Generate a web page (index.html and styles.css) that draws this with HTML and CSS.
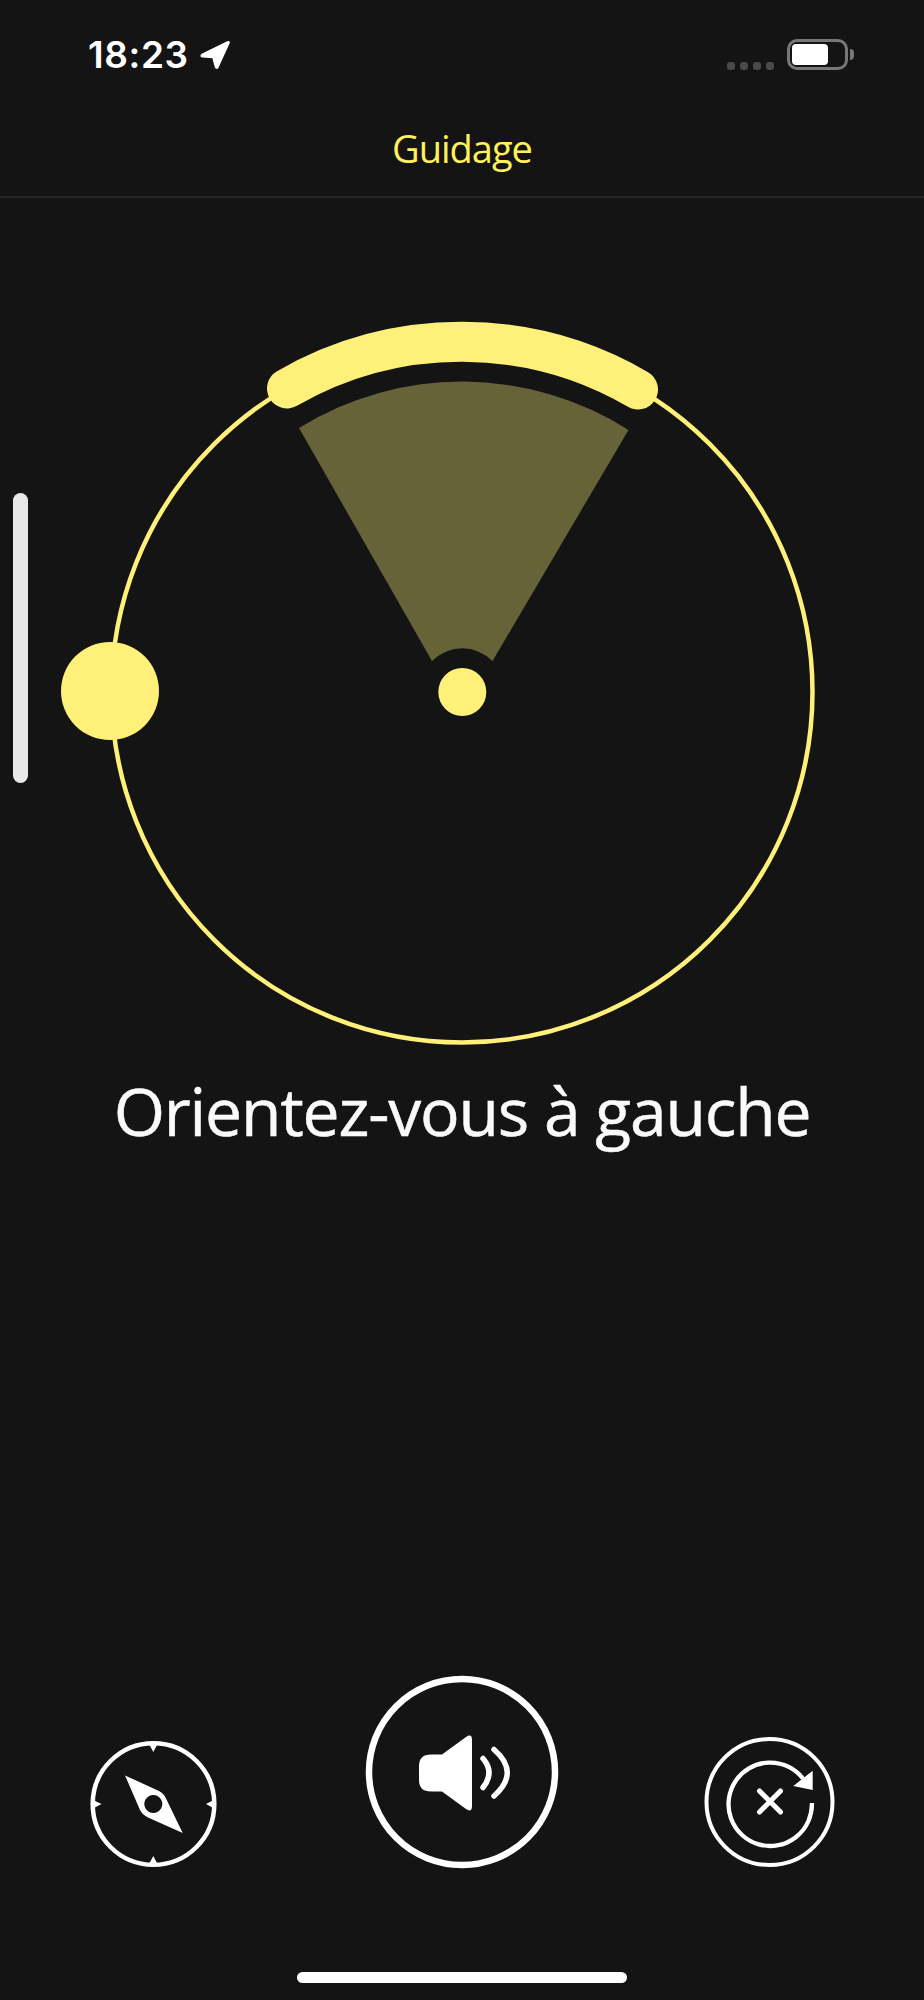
FILE: index.html
```html
<!DOCTYPE html>
<html lang="fr">
<head>
	<title>Guidage</title>
	<meta charset="utf-8">
	<meta name="viewport" content="width=device-width, initial-scale=1">
	<link rel="stylesheet" href="styles.css">
</head>

<body>
	<div class="main">
		<div class="status">
			<span class="time">18:23</span>
			<svg class="loc" width="31" height="30" viewBox="0 0 31 30">
				<path d="M2 14.500 27.500 2Q29.500 1.200 29 3L18 27Q16.500 29.500 15.500 27L13 17.500 2.500 16.800Q0 16 2 14.500Z" fill="#fff" stroke="#fff" stroke-width="1.500" stroke-linejoin="round"/>
			</svg>
			<div class="signal">
				<i></i><i></i><i></i><i></i>
			</div>
			<div class="battery"><b></b></div>
			<div class="battery-nub"></div>
		</div>
		<div class="nav">Guidage</div>

		<div class="gauge">
			<svg class="dial" width="924" height="860" viewBox="0 198 924 860">
				<circle cx="462" cy="692" r="350.5" fill="none" stroke="#fff07a" stroke-width="4.500"/>
				<path d="M299 428A310 310 0 0 1 628.5 430L492.5 661A42.5 42.5 0 0 0 432 661Z" fill="#676338"/>
				<path d="M287 388.500A350 350 0 0 1 638 389.500" fill="none" stroke="#fff07a" stroke-width="40" stroke-linecap="round"/>
				<circle cx="462.300" cy="692" r="24" fill="#fff07a"/>
				<circle cx="110" cy="691" r="49" fill="#fff07a"/>
			</svg>
			<h1 class="instruction">Orientez-vous à gauche</h1>
		</div>

		<div class="controls">
			<svg class="btn-compass" width="130" height="130" viewBox="0 0 130 130">
				<circle cx="65.500" cy="65" r="60.800" fill="none" stroke="#fff" stroke-width="4.500"/>
				<path d="M61 5H69.500L65.300 13ZM61 125H69.500L65.300 117ZM5 61V69.500L13.500 65ZM126 61V69.500L118 65Z" fill="#fff"/>
				<path fill-rule="evenodd" d="M37 36.400 71 52Q76 54.500 78 59.500L94.700 94 60 78.500Q54.500 76 52 71ZM65.300 56a9 9 0 1 0 .01 0Z" fill="#fff"/>
			</svg>
			<svg class="btn-speaker" width="200" height="200" viewBox="0 0 200 200">
				<circle cx="100" cy="100" r="93" fill="none" stroke="#fff" stroke-width="6.500"/>
				<path d="M80 82.500 104 65Q110 61 110 68V134Q110 141 104 137L80 119.500H69Q57 119.500 57 108V94Q57 82.500 69 82.500Z" fill="#fff"/>
				<path d="M121 86.500Q133 100.500 121 115.500M132 77.500Q158.500 100.500 132 124" fill="none" stroke="#fff" stroke-width="5.500" stroke-linecap="round"/>
			</svg>
			<svg class="btn-retry" width="137" height="136" viewBox="0 0 137 136">
				<circle cx="68.500" cy="70" r="63" fill="none" stroke="#fff" stroke-width="4"/>
				<path d="M110.900 71A41.700 41.700 0 1 1 102 46.500" fill="none" stroke="#fff" stroke-width="4.300"/>
				<path d="M92.300 54 111.700 38.700V58Z" fill="#fff"/>
				<path d="M58.500 59 79.500 80M79.500 59 58.500 80" fill="none" stroke="#fff" stroke-width="5" stroke-linecap="round"/>
			</svg>
		</div>
		<div class="home"></div>

		<div class="scrollbar"></div>
	</div>
</body>

</html>
```

FILE: styles.css
```css
body {
	width: 924px;
	height: 2000px;
	margin: 0;
	padding: 0;
	overflow: hidden;
	background: #141414;
	color: white;
	font-family: "Open Sans", "Noto Sans", sans-serif;
}

.main {
	position: relative;
	display: flex;
	flex-direction: column;
	height: 2000px;
}

.status {
	display: flex;
	align-items: center;
	height: 40px;
	padding: 35px 0 1px 88px;
}

.time {
	font-family: Inter, sans-serif;
	font-size: 37px;
	font-weight: 600;
	line-height: 40px;
	letter-spacing: .6px;
}

.loc {
	margin-left: 11px;
}

.signal {
	display: flex;
	gap: 5px;
	margin: 21px 13px 0 auto;
}

.signal i {
	width: 8px;
	height: 8px;
	border-radius: 3px;
	background: #4a4a4a;
}

.battery {
	box-sizing: border-box;
	width: 61px;
	height: 31px;
	padding: 2px;
	border: 3px solid #777;
	border-radius: 10px;
	margin-top: -2px;
}

.battery b {
	display: block;
	width: 36px;
	height: 21px;
	border-radius: 4px;
	background: white;
}

.battery-nub {
	width: 4px;
	height: 11px;
	margin: -2px 70px 0 2px;
	border-radius: 0 5px 5px 0;
	background: #777;
}

.nav {
	height: 122px;
	box-sizing: border-box;
	padding-top: 27px;
	line-height: 90px;
	border-bottom: 2px solid #252525;
	text-align: center;
	color: #fff05c;
	font-size: 38px;
	font-weight: 400;
	letter-spacing: -1px;
}

.gauge {
	display: flex;
	flex-direction: column;
	align-items: center;
}

.dial {
	display: block;
}

.instruction {
	margin: 7px 0 0;
	font-size: 66px;
	font-weight: 500;
	line-height: 90px;
	letter-spacing: -1.2px;
	-webkit-text-stroke: .5px #fafafa;
	color: #fafafa;
}

.controls {
	display: flex;
	align-items: flex-start;
	margin-top: 517px;
	padding-left: 88px;
}

.btn-compass {
	margin-top: 67px;
}

.btn-speaker {
	margin: 0 139px 0 144px;
}

.btn-retry {
	margin-top: 60px;
}

.home {
	width: 330px;
	height: 11px;
	margin: auto auto 17px;
	border-radius: 6px;
	background: white;
}

.scrollbar {
	position: absolute;
	left: 13px;
	top: 493px;
	width: 15px;
	height: 290px;
	border-radius: 8px;
	background: #e8e8e8;
}
```
